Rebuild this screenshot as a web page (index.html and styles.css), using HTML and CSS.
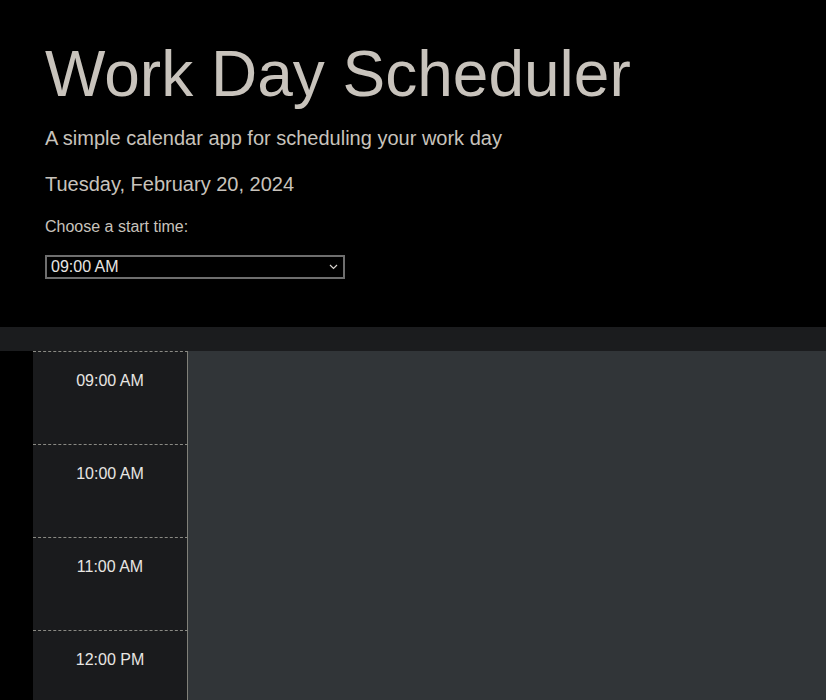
FILE: index.html
```html
<!DOCTYPE html>
<html lang="en">
<head>
<meta charset="utf-8">
<title>Work Day Scheduler</title>
<link rel="stylesheet" href="styles.css">
</head>
<body>
<header class="jumbotron">
  <h1 class="title">Work Day Scheduler</h1>
  <p class="lead">A simple calendar app for scheduling your work day</p>
  <p class="lead date">Tuesday, February 20, 2024</p>
  <label class="start-label" for="start">Choose a start time:</label>
  <div class="select-wrap">
    <select id="start" class="start-select">
      <option>09:00 AM</option>
    </select>
    <svg class="chevron" width="9" height="6" viewBox="0 0 9 6"><path d="M1 1 L4.5 4.5 L8 1" fill="none" stroke="#d8d4cf" stroke-width="1.2"/></svg>
  </div>
</header>
<div class="band"></div>
<main class="schedule">
  <div class="row"><div class="hour">09:00 AM</div><textarea class="desc"></textarea></div>
  <div class="row"><div class="hour">10:00 AM</div><textarea class="desc"></textarea></div>
  <div class="row"><div class="hour">11:00 AM</div><textarea class="desc"></textarea></div>
  <div class="row"><div class="hour">12:00 PM</div><textarea class="desc"></textarea></div>
</main>
</body>
</html>
```
FILE: styles.css
```css
html, body {
  margin: 0;
  background: #000;
  font-family: "Liberation Sans", Arial, sans-serif;
  overflow: hidden;
}
.jumbotron {
  padding: 36px 45px 48px;
  color: #c8c3bc;
}
.title {
  margin: 0 0 10px;
  font-size: 64px;
  font-weight: 300;
  line-height: 1.2;
}
.lead {
  margin: 0 0 16px;
  font-size: 20px;
  line-height: 30px;
}
.start-label {
  display: block;
  font-size: 16px;
  line-height: 24px;
  margin-bottom: 16px;
}
.select-wrap {
  position: relative;
  width: 300px;
}
.start-select {
  display: block;
  appearance: none;
  -webkit-appearance: none;
  width: 300px;
  height: 24px;
  margin: 0;
  padding: 0 0 0 4px;
  background: #000;
  color: #e8e6e3;
  border: 2px solid #6e6e6e;
  border-radius: 0;
  font-family: "Liberation Sans", Arial, sans-serif;
  font-size: 16px;
  line-height: 20px;
}
.chevron {
  position: absolute;
  right: 7px;
  top: 9px;
}
.band {
  height: 24px;
  background: #1b1c1e;
}
.schedule {
  padding-left: 33px;
}
.row {
  display: flex;
  height: 93px;
}
.hour {
  width: 155px;
  flex: none;
  box-sizing: border-box;
  background: #1a1b1d;
  border-top: 1px dashed #8a8a84;
  border-right: 1px solid #808079;
  color: #e8e6e3;
  font-size: 16px;
  line-height: 24px;
  text-align: center;
  padding-top: 17px;
}
.desc {
  flex: 1;
  margin: 0;
  border: 0;
  padding: 0;
  resize: none;
  background: #313538;
  outline: none;
}
```
